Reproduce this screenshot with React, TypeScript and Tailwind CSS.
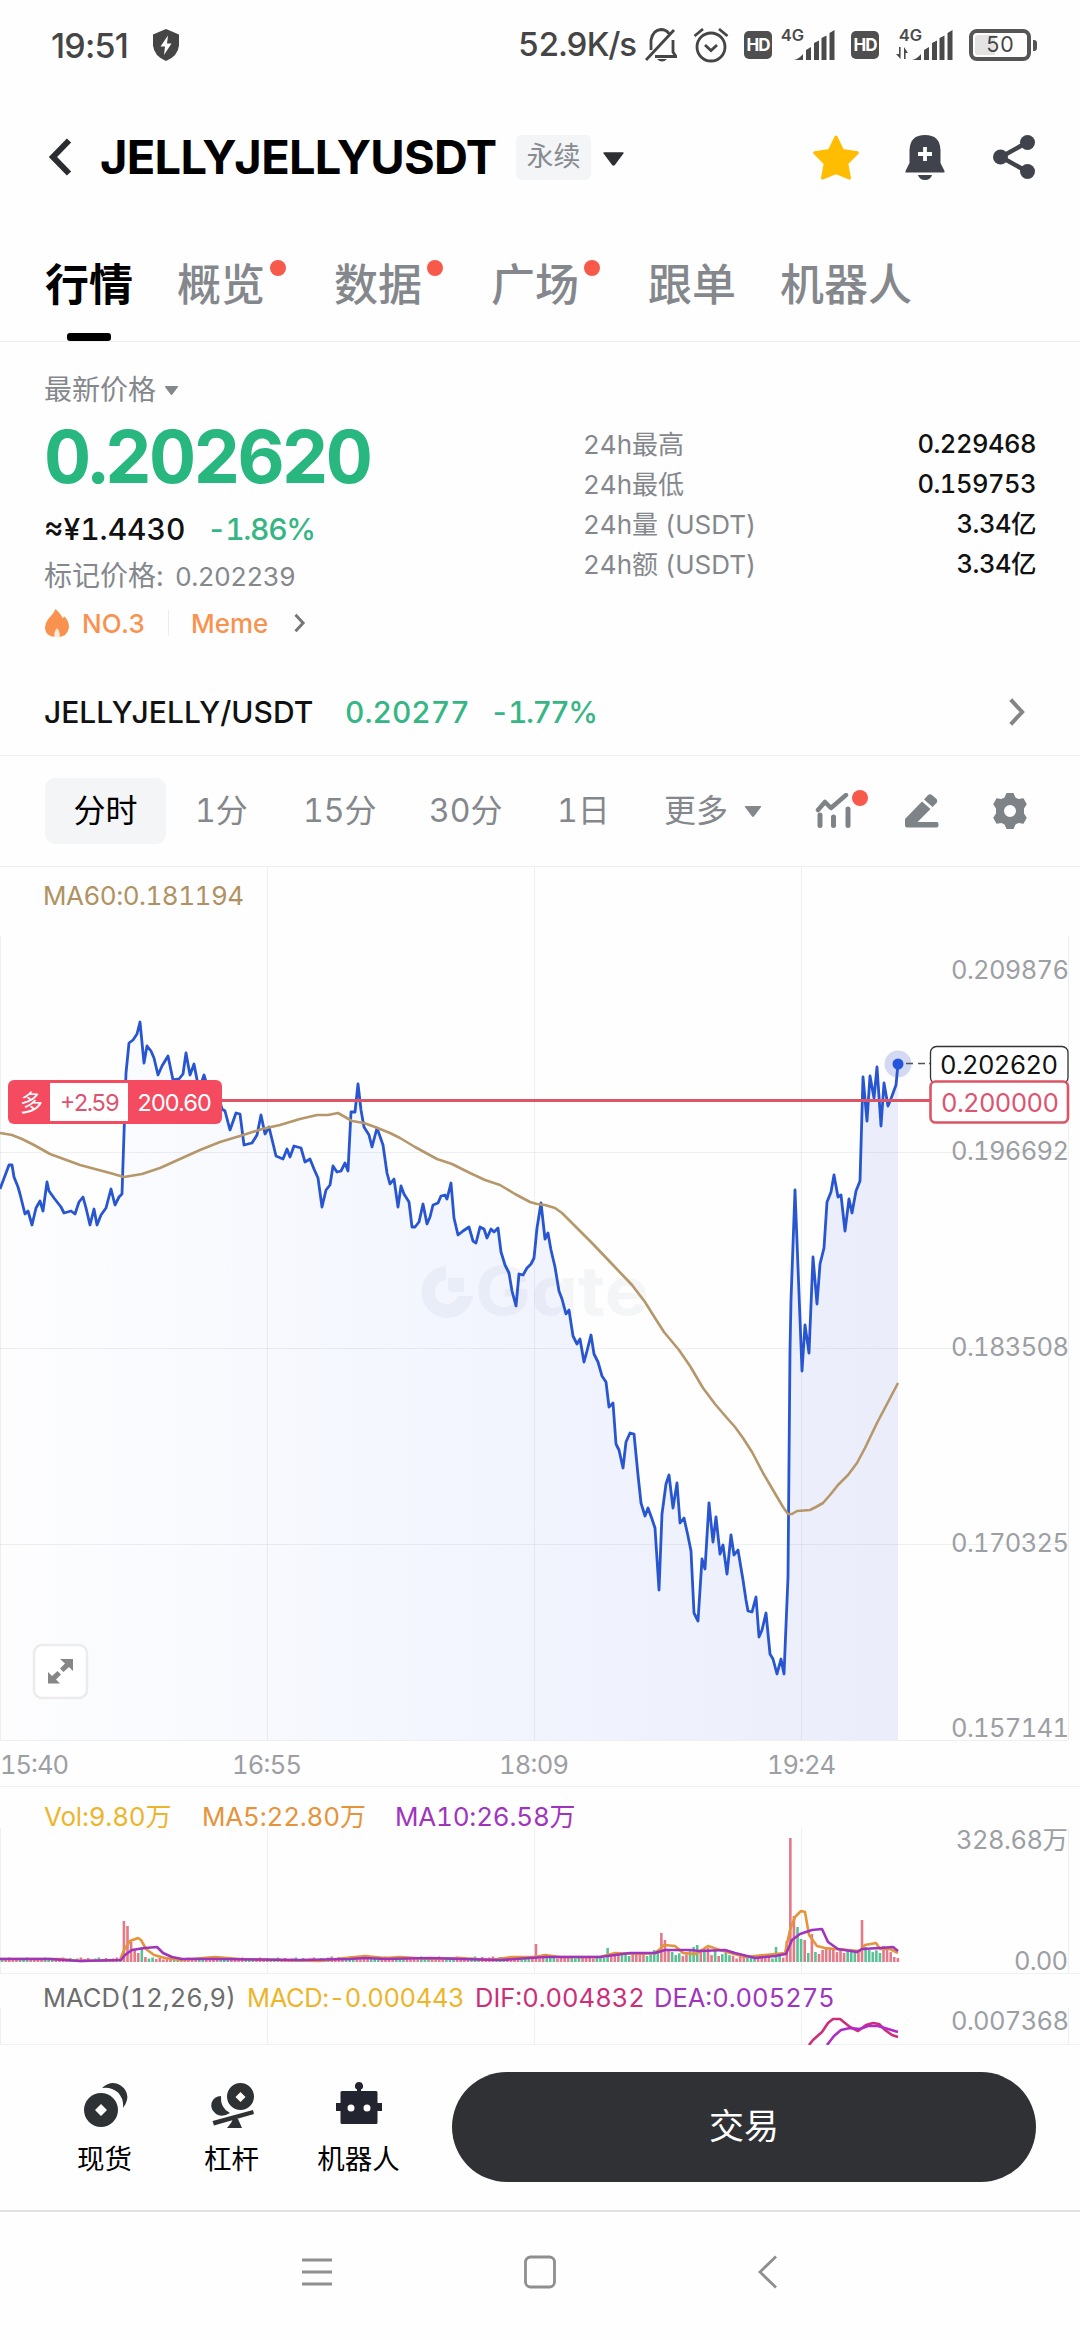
import { ReactNode } from "react";
import { clsx } from "clsx";

const TABS = [
    { label: "行情", active: true },
    { label: "概览", dot: true },
    { label: "数据", dot: true },
    { label: "广场", dot: true },
    { label: "跟单" },
    { label: "机器人" },
];

const STATS = [
    ["24h最高", "0.229468"],
    ["24h最低", "0.159753"],
    ["24h量 (USDT)", "3.34亿"],
    ["24h额 (USDT)", "3.34亿"],
];

const GRID_X = [267, 534, 801];
const FONT = "Inter, 'Noto Sans CJK SC', sans-serif";

const PRICE =
    "0,1189 6,1173 9,1165 12,1165 14,1177 18,1187 20,1194 25,1214 28,1211 32,1225 36,1208 40,1201 43,1211 47,1182 49,1191 54,1198 61,1207 64,1213 71,1211 75,1214 79,1202 83,1197 86,1208 90,1225 94,1209 97,1225 101,1215 106,1208 111,1189 115,1205 119,1197 122,1194 126,1073 129,1043 133,1040 137,1034 140,1022 144,1063 147,1046 151,1051 154,1058 158,1075 162,1066 168,1056 173,1080 179,1079 183,1074 186,1053 190,1075 194,1064 199,1090 204,1075 210,1095 216,1088 222,1109 225,1111 230,1130 236,1113 240,1114 244,1145 252,1143 257,1135 261,1115 265,1134 269,1127 276,1156 283,1159 287,1149 290,1157 294,1146 301,1148 305,1162 310,1159 314,1169 318,1178 322,1207 326,1190 330,1185 333,1166 337,1172 341,1171 345,1163 348,1171 351,1112 355,1112 358,1084 361,1110 364,1127 369,1135 372,1147 377,1128 383,1145 387,1173 390,1184 394,1179 398,1207 401,1186 404,1194 409,1202 412,1227 415,1227 419,1222 423,1204 427,1224 430,1217 433,1205 438,1203 441,1196 445,1195 447,1199 451,1183 454,1218 458,1235 463,1231 469,1227 473,1241 476,1243 480,1227 484,1229 487,1238 491,1229 494,1232 498,1228 501,1252 505,1265 509,1273 512,1291 516,1306 519,1274 523,1275 527,1268 531,1264 534,1258 537,1228 541,1203 545,1239 548,1233 551,1250 555,1267 559,1291 562,1299 566,1314 569,1310 573,1336 577,1344 580,1339 584,1362 587,1351 591,1335 594,1354 598,1362 602,1376 606,1382 609,1407 613,1403 616,1444 619,1450 623,1468 626,1442 630,1433 634,1434 638,1475 641,1503 645,1516 648,1508 652,1519 655,1528 659,1590 662,1514 666,1484 669,1475 673,1508 677,1483 680,1523 684,1518 688,1536 691,1551 694,1613 698,1621 702,1559 705,1569 709,1503 713,1542 716,1517 720,1554 723,1545 727,1574 731,1535 734,1555 738,1550 743,1580 746,1600 748,1611 752,1612 756,1597 759,1637 762,1630 766,1613 770,1654 773,1659 777,1674 781,1659 784,1674 788,1577 790,1350 791,1300 795,1190 802,1371 805,1325 809,1353 813,1257 817,1304 820,1264 824,1248 827,1202 831,1192 834,1175 838,1197 841,1195 845,1231 849,1199 852,1213 856,1191 860,1181 863,1077 867,1121 870,1076 874,1098 877,1067 881,1126 884,1083 888,1106 892,1096 896,1085 898,1064";
const MA60 =
    "0,1133 12,1135 22,1139 34,1145 50,1154 80,1165 110,1173 124,1177 142,1174 160,1168 180,1159 200,1150 220,1142 240,1136 262,1129 280,1125 300,1119 317,1115 328,1115 338,1113 352,1121 364,1123 375,1127 390,1133 400,1138 415,1147 437,1159 452,1164 470,1173 485,1180 500,1185 515,1194 530,1202 537,1204 545,1205 555,1208 562,1213 575,1226 592,1243 612,1264 632,1285 645,1302 655,1318 664,1332 679,1350 690,1366 703,1388 715,1404 727,1418 735,1427 743,1438 752,1452 763,1473 773,1490 783,1507 788,1514 792,1514 797,1511 810,1510 816,1507 823,1503 830,1495 838,1485 848,1475 857,1463 865,1448 877,1423 887,1404 898,1383";

// [candle index, height, rising]
const SPIKES: [number, number, boolean][] = [
    [34, 41, true], [35, 36, true], [36, 20, true], [37, 12, true], [38, 9, true], [39, 15, false], [40, 5, true],
    [149, 18, true], [169, 14, false], [182, 12, false], [183, 12, false], [184, 29, true], [185, 22, true], [186, 13, true], [187, 10, false],
    [192, 11, false], [193, 15, false], [194, 17, false], [195, 12, true], [196, 13, false], [197, 14, true], [199, 12, false],
    [216, 15, false], [219, 21, true], [220, 124, true], [221, 46, true], [222, 35, false], [223, 23, false], [224, 22, true],
    [225, 9, false], [226, 28, true], [227, 10, false], [228, 8, true], [229, 12, true], [230, 15, true], [231, 13, true], [232, 13, true],
    [240, 42, true], [241, 15, false], [242, 12, false], [246, 16, true], [249, 5, true], [250, 4, true],
];

const volumes = Array.from({ length: 251 }, (_, i) => {
    const spike = SPIKES.find(([n]) => n === i);
    if (spike) return { height: spike[1], up: spike[2] };
    const base = i > 225 ? 9 : i > 168 && i < 204 ? 6 : i > 90 ? 3.5 : 2.5;
    return { height: base + ((i * 7) % 5) * (i > 168 ? 0.9 : 0.5), up: (i * 13) % 7 > (i > 40 && i < 60 ? 1 : 2) };
});

const Caret = ({ className }: { className?: string }) => (
    <svg viewBox="0 0 20 13" className={className} fill="currentColor">
        <path d="M1.5 0h17q2 0 .8 1.6l-8 10.6q-1.3 1.4-2.6 0l-8-10.6Q-.5 0 1.5 0z" />
    </svg>
);

const Chevron = ({ className, width = 4 }: { className?: string; width?: number }) => (
    <svg viewBox="0 0 20 34" className={className} fill="none" stroke="currentColor" strokeWidth={width}>
        <path d="M4 3l13 14L4 31" />
    </svg>
);

const Signal = ({ data }: { data?: boolean }) => (
    <svg viewBox="0 0 58 34" className="h-[34px] w-[58px] overflow-visible text-[#4a4a4a]" fill="currentColor">
        <text x="3" y="13" fontSize="15.5" fontWeight="600" fontFamily={FONT} textLength="23" lengthAdjust="spacingAndGlyphs">4G</text>
        {data && <path d="M0 26h3V19h1.600v12zM8 19l4 6H9.600v6H8z" />}
        <path d="M16 32q5-1 9-6v6zM28 32V22l5-3v13zM36 32V15l5-2.500V32zM43.500 32V10l5-2.500V32zM51.500 32V5l5-3v30z" />
    </svg>
);

const HdBadge = () => (
    <div className="flex h-[28px] w-[28px] items-center justify-center rounded-[5px] bg-[#4f4f4f] text-[17px] leading-none font-bold tracking-[-1px] text-white">
        HD
    </div>
);

const StatusBar = () => (
    <div className="flex h-[90px] items-center pr-[43px] pl-[51px] text-[#454545]">
        <span className="w-[101px] text-[34px] font-medium tracking-[-0.8px] proportional-nums">19:51</span>
        <svg viewBox="0 0 28 32" className="h-[32px] w-[28px]">
            <path d="M14 0l13 5.500v11Q26 27 14 32 2 27 1 16.500v-11z" fill="#454545" />
            <path d="M16 6.500L8.500 17.500H13l-1 8.500 7.500-11.500H15z" fill="#fff" />
        </svg>
        <span className="ml-auto text-[33px] font-medium tracking-[-1.1px]">52.9K/s</span>
        <svg viewBox="0 0 32 34" className="ml-[9px] h-[34px] w-[32px]" fill="none" stroke="currentColor" strokeWidth="2.8">
            <path d="M1 32L29 2M6 22V12Q8 2 16 1.500q5 0 8 4M28 12v12l3 4.500H10" />
            <path d="M12 31h10q-5 5-10 0z" fill="currentColor" stroke="none" />
        </svg>
        <svg viewBox="0 0 36 36" className="ml-[16px] h-[36px] w-[36px]" fill="none" stroke="currentColor" strokeWidth="2.8">
            <circle cx="18" cy="20" r="14" />
            <path d="M1.500 9L10 2M34.500 9L26 2M12 18l6 5.500 6-5.500" />
        </svg>
        <div className="ml-[15px]"><HdBadge /></div>
        <div className="ml-[6px]"><Signal /></div>
        <div className="ml-[15px]"><HdBadge /></div>
        <div className="ml-[17px]"><Signal data /></div>
        <div className="ml-[15px] flex h-[32px] w-[62px] items-center justify-center rounded-[8px] border-4 border-[#555] p-[2px]">
            <div className="flex h-full w-full items-center justify-center rounded-[3px] bg-linear-to-r from-[#e3e3e3] from-40% to-transparent to-40% text-[21.5px] leading-none">
                50
            </div>
        </div>
        <div className="ml-[2px] h-[11px] w-[4px] rounded-r-[3px] bg-[#555]" />
    </div>
);

const Header = () => (
    <div className="flex h-[134px] items-center pr-[44px] pl-[48px]">
        <svg viewBox="0 0 24 38" className="h-[38px] w-[24px]" fill="none" stroke="#2b2c30" strokeWidth="6">
            <path d="M21 2.500L5 19l16 16.500" />
        </svg>
        <h1 className="ml-[28px] w-[416px] text-[47px] font-bold tracking-[-0.7px] text-black">JELLYJELLYUSDT</h1>
        <span className="flex h-[45px] w-[75px] items-center justify-center rounded-[5px] bg-[#f3f5f7] text-[27px] text-[#888b90]">永续</span>
        <Caret className="mt-[4px] ml-[12px] h-[14px] w-[21px] text-[#2e2f33]" />
        <svg viewBox="0 0 48 46" className="ml-auto h-[46px] w-[48px]">
            <path d="M24 3l6.600 13.600 14.800 2.200-10.600 10.600L37.500 44 24 38.500 10.500 44l2.700-14.600L2.600 18.800l14.800-2.200z" fill="#ffbc00" stroke="#ffbc00" strokeWidth="3" strokeLinejoin="round" />
        </svg>
        <svg viewBox="0 0 40 46" className="ml-[45px] h-[46px] w-[40px]">
            <path d="M20 1Q35 1 35.500 16v13l4 8v1.500H.5V37l4-8V16Q5 1 20 1z" fill="#41434c" />
            <path d="M13 41h14q-1.500 5-7 5t-7-5z" fill="#41434c" />
            <path d="M20 13v14M13 20h14" stroke="#fff" strokeWidth="3.800" />
        </svg>
        <svg viewBox="0 0 44 46" className="ml-[47px] h-[46px] w-[44px]" fill="#41434c">
            <circle cx="35.500" cy="8.500" r="7.500" />
            <circle cx="8.500" cy="23" r="7.500" />
            <circle cx="35.500" cy="37.500" r="7.500" />
            <path d="M35 8.500L9 23l26 14.500" fill="none" stroke="#41434c" strokeWidth="4.500" />
        </svg>
    </div>
);

const Tabs = () => (
    <div className="flex h-[118px] gap-[44px] border-b border-[#eff0f2] pl-[45px]">
        {TABS.map((tab) => (
            <div key={tab.label} className={clsx("relative flex flex-col items-center justify-between pt-[39px]", tab.dot && "pr-[25px]")}>
                <span className={clsx("text-[44px] leading-[44px]", tab.active ? "font-bold text-black" : "font-medium text-[#84888c]")}>{tab.label}</span>
                {tab.active && <div className="h-[8px] w-[44px] rounded-[3px] bg-black" />}
                {tab.dot && <div className="absolute top-[36px] right-[4px] h-[16px] w-[16px] rounded-full bg-[#f7594b]" />}
            </div>
        ))}
    </div>
);

const Ticker = () => (
    <div className="flex h-[304px] justify-between pt-[30px] pr-[44px] pl-[44px]">
        <div>
            <div className="flex h-[36px] items-center text-[28px] text-[#84888c]">
                最新价格
                <Caret className="ml-[8px] h-[9px] w-[15px]" />
            </div>
            <div className="flex h-[98px] items-center text-[73px] font-bold tracking-[-3px] text-[#27b77f]">0.202620</div>
            <div className="flex h-[46px] items-center text-[30px] font-medium">
                <span className="w-[163px] text-[#111]">≈¥1.4430</span>
                <span className="tracking-[-1.3px] text-[#36b585]">-1.86%</span>
            </div>
            <div className="flex h-[48px] items-center text-[26px] text-[#84888c]">
                <span className="w-[131px] text-[28px]">标记价格:</span>
                <span className="tracking-[-0.6px]">0.202239</span>
            </div>
            <div className="flex h-[46px] items-center text-[26px] font-medium text-[#f9924f]">
                <svg viewBox="0 0 24 28" className="ml-[1px] h-[28px] w-[24px]">
                    <path d="M10.500 0Q16 5 17.500 9l2-1.500Q24 12 24 18 23 28 12 28 0 28 0 18 1 12 5 8 9 4 10.500 0z" fill="currentColor" />
                    <path d="M12 19q3.500 4 2.500 9h-5Q8.500 23 12 19z" fill="#ffe9da" />
                </svg>
                <span className="ml-[13px] w-[86px]">NO.3</span>
                <div className="h-[26px] w-px bg-[#ececef]" />
                <span className="ml-[22px] w-[101px]">Meme</span>
                <Chevron className="h-[20px] w-[14px] text-[#777]" width={5} />
            </div>
        </div>
        <div className="w-[453px] pt-[52px] text-[26px]">
            {STATS.map(([label, value]) => (
                <div key={label} className="flex h-[40px] items-center justify-between">
                    <span className="text-[#84888c]">{label}</span>
                    <span className="text-[25.5px] font-medium tracking-[-0.5px] text-[#111]">{value}</span>
                </div>
            ))}
        </div>
    </div>
);

const PairRow = () => (
    <div className="mt-[23px] flex h-[87px] items-center border-b border-[#eff0f2] pr-[54px] pl-[44px] text-[30px] font-medium text-[#36b585]">
        <span className="w-[301px] text-[#111]">JELLYJELLY/USDT</span>
        <span className="w-[145px]">0.20277</span>
        <span className="tracking-[-1.5px]">-1.77%</span>
        <Chevron className="ml-auto h-[30px] w-[20px] text-[#858585]" width={4.5} />
    </div>
);

const Intervals = () => (
    <div className="flex h-[111px] items-center border-b border-[#eff0f2] pl-[45px] text-[32px] text-[#84888c]">
        <span className="flex h-[66px] w-[121px] items-center justify-center rounded-[10px] bg-[#f3f5f7] text-black">分时</span>
        <span className="ml-[29px] w-[108px]">1分</span>
        <span className="w-[126px]">15分</span>
        <span className="w-[128px]">30分</span>
        <span className="w-[107px]">1日</span>
        <span className="w-[80px]">更多</span>
        <Caret className="h-[11px] w-[18px]" />
        <div className="relative ml-[53px]">
            <svg viewBox="0 0 38 36" className="h-[36px] w-[38px]" fill="none" stroke="#7e8387" strokeWidth="5" strokeLinecap="round">
                <path d="M3 17l7-8 6 6L31 2" strokeWidth="4.500" strokeLinejoin="round" />
                <path d="M5 22v10.500M18.500 24v8.500M33 16v16.500" />
            </svg>
            <div className="absolute top-[-3px] right-[-15px] h-[16px] w-[16px] rounded-full bg-[#f7594b]" />
        </div>
        <svg viewBox="0 0 36 34" className="ml-[51px] h-[34px] w-[36px]" fill="#7e8387">
            <path d="M24 1q2-1.500 4 0l4.500 4q1.500 2 0 4l-4 4L20 5.500zM18 7.500l8.500 7.500L13.500 28H33q1.500 0 1.500 2v1.500q0 2-2 2H3q-2 0-2-2V25z" />
        </svg>
        <svg viewBox="0 0 36 36" className="ml-[52px] h-[36px] w-[36px]" fill="#7e8387" fillRule="evenodd">
            <path d="M14.500 0h7l2 4.500 3 1.500 5-.8 3.300 6L32 15.500v5l2.800 4.300-3.300 6-5-.8-3 1.500-2 4.500h-7l-2-4.500-3-1.500-5 .8-3.300-6L4 20.500v-5L1.200 11.200l3.300-6 5 .8 3-1.500zM18 12a6 6 0 100 12 6 6 0 000-12z" />
        </svg>
    </div>
);

type LabelProps = { x: number; y: number; w: number; fill?: string; size?: number; children: ReactNode };

const Label = ({ x, y, w, fill = "#9c9fa3", size = 25.5, children }: LabelProps) => (
    <text x={x} y={y} textLength={w} fontSize={size} fill={fill} fontFamily={FONT}>
        {children}
    </text>
);

const GridLines = ({ top, edge, bottom }: { top: number; edge: number; bottom: number }) => (
    <g stroke="#5a6b80" strokeOpacity="0.1">
        {GRID_X.map((x) => (
            <line key={x} x1={x + 0.5} x2={x + 0.5} y1={top} y2={bottom} />
        ))}
        <line x1="0.5" x2="0.5" y1={edge} y2={bottom} />
        <line x1="1068.5" x2="1068.5" y1={edge} y2={bottom} />
    </g>
);

const PricePanel = () => (
    <div className="relative h-[920px] border-b border-[#f0f1f3]">
        <svg viewBox="0 867 1080 920" className="absolute inset-0 h-[920px] w-full">
            <defs>
                <linearGradient id="area" x1="0" x2="1" y1="0" y2="0">
                    <stop offset="0" stopColor="#3068ff" stopOpacity="0.005" />
                    <stop offset="0.5" stopColor="#3068ff" stopOpacity="0.055" />
                    <stop offset="1" stopColor="#2d50d0" stopOpacity="0.095" />
                </linearGradient>
            </defs>
            <GridLines top={867} edge={936} bottom={1740} />
            <g stroke="#5a6b80" strokeOpacity="0.1">
                <line x1="0" x2="1068" y1="1152.5" y2="1152.5" />
                <line x1="0" x2="1068" y1="1348.5" y2="1348.5" />
                <line x1="0" x2="1068" y1="1544.5" y2="1544.5" />
                <line x1="0" x2="1068" y1="1740.5" y2="1740.5" />
            </g>
            <polygon points={`0,1740 ${PRICE} 898,1740`} fill="url(#area)" />
            {/* watermark */}
            <g fill="#6b7f95" fillOpacity="0.07">
                <path d="M446 1266v14a12 12 0 1 0 12 16h15a26 26 0 1 1-27-30zM448 1278h16v14h-12q-4 0-4-4z" />
                <text x="475" y="1315" fontSize="67" fontWeight="700" fontFamily={FONT} textLength="174" lengthAdjust="spacingAndGlyphs" style={{ fontFeatureSettings: "'cv11'" }}>Gate</text>
            </g>
            <polyline points={PRICE} fill="none" stroke="#2855d0" strokeWidth="2.800" strokeLinejoin="round" />
            <polyline points={MA60} fill="none" stroke="#b5976a" strokeWidth="2.600" strokeLinejoin="round" />
            <circle cx="898" cy="1064" r="13.500" fill="#3a58c8" fillOpacity="0.22" />
            <circle cx="898" cy="1064" r="5.500" fill="#2554dc" />
            <path d="M906 1063.500h7M918 1063.500h7M929 1063.500h3" stroke="#555" strokeWidth="1.500" />
            <path d="M222 1100.500h708" stroke="#dc5465" strokeWidth="3" />

            <Label x={951} y={979} w={118}>0.209876</Label>
            <Label x={951} y={1160} w={118}>0.196692</Label>
            <Label x={951} y={1356} w={118}>0.183508</Label>
            <Label x={951} y={1552} w={118}>0.170325</Label>
            <Label x={951} y={1737} w={118}>0.157141</Label>

            <rect x="930.5" y="1046.5" width="137.5" height="37" rx="6" fill="#fff" stroke="#333" strokeWidth="1.3" />
            <Label x={940} y={1074} w={118} fill="#111">0.202620</Label>
            <rect x="930.5" y="1081.5" width="137.5" height="41" rx="5" fill="#fff" stroke="#dc5465" strokeWidth="2.6" />
            <Label x={941} y={1112} w={118} fill="#dc5470">0.200000</Label>

            <rect x="8" y="1080" width="214" height="44" rx="6" fill="#f44b60" />
            <rect x="50" y="1083" width="78" height="38" fill="#fff" />
            <Label x={20} y={1111} w={23} fill="#fff" size={23}>多</Label>
            <Label x={60} y={1111} w={60} fill="#dc5470" size={23.5}>+2.59</Label>
            <Label x={137} y={1111} w={75} fill="#fff" size={23.5}>200.60</Label>

            <Label x={0} y={1774} w={69}>15:40</Label>
            <Label x={232} y={1774} w={70}>16:55</Label>
            <Label x={499} y={1774} w={70}>18:09</Label>
            <Label x={767} y={1774} w={69}>19:24</Label>

            <rect x="34" y="1645" width="53" height="53" rx="8" fill="#fff" stroke="#ececec" strokeWidth="2.5" />
            <path d="M60 1659h13v12l-4-4-5.500 5-3.500-3.500 5-5zM48 1672l4 4 5.500-5 3.500 3.500-5 5 4 4H48z" fill="#868686" />
        </svg>
        <div className="relative flex h-[57px] items-center pl-[43px] text-[26px] tracking-[-0.5px] text-[#b09262]">MA60:0.181194</div>
    </div>
);

const VolumePanel = () => (
    <div className="relative h-[187px] border-b border-[#f0f1f3]">
        <svg viewBox="0 1787 1080 187" className="absolute inset-0 h-[187px] w-full overflow-visible">
            <GridLines top={1828} edge={1828} bottom={1973} />
            {volumes.map((bar, i) => (
                <rect key={i} x={i * 3.583 + 0.8} y={1962 - bar.height} width="2.6" height={bar.height} fill={bar.up ? "#e27a88" : "#5cc096"} />
            ))}
            <g fill="none" strokeWidth="2.6" strokeLinejoin="round">
                <polyline
                    stroke="#e5943c"
                    points="0,1959 60,1959 80,1961 120,1960 124,1950 130,1941 138,1938 141,1940 146,1949 154,1955 165,1958 180,1960 215,1957 240,1959 320,1961 345,1958 365,1956 385,1958 400,1957 430,1959 460,1958 490,1960 512,1957 535,1957 545,1955 560,1957 600,1957 615,1953 640,1954 655,1953 660,1949 664,1945 675,1946 683,1953 695,1954 702,1950 708,1946 720,1950 745,1957 765,1955 785,1953 790,1930 795,1917 801,1911 805,1912 809,1935 817,1946 825,1948 835,1949 860,1951 865,1945 876,1943 880,1949 890,1949 898,1953"
                />
                <polyline
                    stroke="#a035bd"
                    points="0,1959 50,1959 80,1961 121,1960 125,1955 132,1950 145,1948 157,1947 163,1953 172,1957 182,1959 215,1959 300,1960 350,1959 365,1958 385,1959 430,1958 460,1959 500,1960 530,1958 545,1957 600,1957 630,1953 655,1953 665,1950 690,1950 700,1951 725,1950 735,1953 755,1958 775,1956 786,1954 792,1940 800,1934 812,1930 822,1929 828,1942 838,1949 857,1952 862,1949 880,1948 893,1947 898,1951"
                />
            </g>
            <Label x={956} y={1849} w={112}>328.68万</Label>
            <Label x={1014} y={1970} w={54}>0.00</Label>
        </svg>
        <div className="relative flex h-[59px] items-center pl-[44px] text-[26px] tracking-[-0.2px]">
            <span className="w-[158px] text-[#ecb52c]">Vol:9.80万</span>
            <span className="w-[193px] text-[#e5943c]">MA5:22.80万</span>
            <span className="text-[#a035bd]">MA10:26.58万</span>
        </div>
    </div>
);

const MacdPanel = () => (
    <div className="relative h-[71px] border-b border-[#f0f1f3]">
        <svg viewBox="0 1974 1080 71" className="absolute inset-0 h-[71px] w-full">
            <GridLines top={2008} edge={2008} bottom={2044} />
            <g fill="none" strokeWidth="2.6" strokeLinejoin="round">
                <polyline stroke="#cc2f78" points="809,2045 813,2040 822,2032 828,2023 833,2019 840,2019 850,2027 858,2031 866,2025 873,2023 879,2024 885,2030 892,2035 898,2037" />
                <polyline stroke="#b02cc4" points="827,2045 834,2036 841,2030 850,2028 860,2029 868,2026 878,2026 888,2029 898,2032" />
            </g>
            <Label x={951} y={2030} w={118}>0.007368</Label>
        </svg>
        <div className="relative flex h-[48px] items-center pl-[43px] text-[25.5px]">
            <span className="w-[204px] text-[#6d6d6d]">MACD(12,26,9)</span>
            <span className="w-[228px] tracking-[-0.4px] text-[#ecb52c]">MACD:-0.000443</span>
            <span className="w-[179px] text-[#cc2f78]">DIF:0.004832</span>
            <span className="text-[#a035bd]">DEA:0.005275</span>
        </div>
    </div>
);

const Action = ({ label, children }: { label: string; children: ReactNode }) => (
    <div className="flex w-[127px] flex-col items-center gap-[16px]">
        <svg viewBox="0 0 48 48" className="h-[48px] w-[48px]" fill="#2f3234">{children}</svg>
        <span className="text-[27.5px] leading-[28px] text-black">{label}</span>
    </div>
);

const BottomBar = () => (
    <div className="flex h-[167px] items-center border-b-2 border-[#e2e2e2] pr-[44px] pb-[2px] pl-[41px]">
        <Action label="现货">
            <path d="M21 7Q30-1 39 4q9 6 7 15-1 4-4 8Q43 18 37 11.500 30 5.500 21 7z" />
            <path fillRule="evenodd" d="M20 12a17 17 0 100 34 17 17 0 000-34zm0 11l6 6-6 6-6-6z" />
        </Action>
        <Action label="杠杆">
            <path fillRule="evenodd" d="M32.500 2a13.500 13.500 0 100 27 13.500 13.500 0 000-27zm0 9l5 5-5 5-5-5z" />
            <path d="M13 15Q12 27 22 32 14 37 8 33 2 28 3.500 22 6 15 13 15zM4.500 40L45 29l1 4L6 44.500zM25 38h5l4 9H19l4-5z" />
        </Action>
        <Action label="机器人">
            <path
                fill="#22242f"
                fillRule="evenodd"
                d="M24 1a4 4 0 012 7.500V10h15q1.500 0 1.500 1.500V22H47v8h-4.500v11.500q0 1.500-1.500 1.500H7q-1.500 0-1.500-1.500V30H1v-8h4.500V11.500Q5.500 10 7 10h15V8.500A4 4 0 0124 1zm-8 22.500a3.500 3.500 0 100 7 3.500 3.500 0 000-7zm16 0a3.500 3.500 0 100 7 3.500 3.500 0 000-7z"
            />
        </Action>
        <button className="ml-auto h-[110px] w-[584px] rounded-full bg-[#303135] text-[35px] text-white">交易</button>
    </div>
);

const SystemNav = () => (
    <div className="flex h-[120px] items-center pl-[302px]">
        <svg viewBox="0 0 480 34" className="h-[34px] w-[480px]" fill="none" stroke="#8f8f8f" strokeWidth="2.8">
            <path d="M0 5h30M0 17h30M0 29h30" />
            <rect x="223.5" y="2" width="29" height="30" rx="5" />
            <path d="M474 1.500L458 17l16 15.500" />
        </svg>
    </div>
);

const App = () => {
    return (
        <div className="h-[2340px] w-[1080px] overflow-hidden bg-[#fefefe] font-[Inter,'Noto_Sans_CJK_SC',sans-serif] whitespace-nowrap tabular-nums">
            <StatusBar />
            <Header />
            <Tabs />
            <Ticker />
            <PairRow />
            <Intervals />
            <PricePanel />
            <VolumePanel />
            <MacdPanel />
            <BottomBar />
            <SystemNav />
        </div>
    );
};

export default App;
